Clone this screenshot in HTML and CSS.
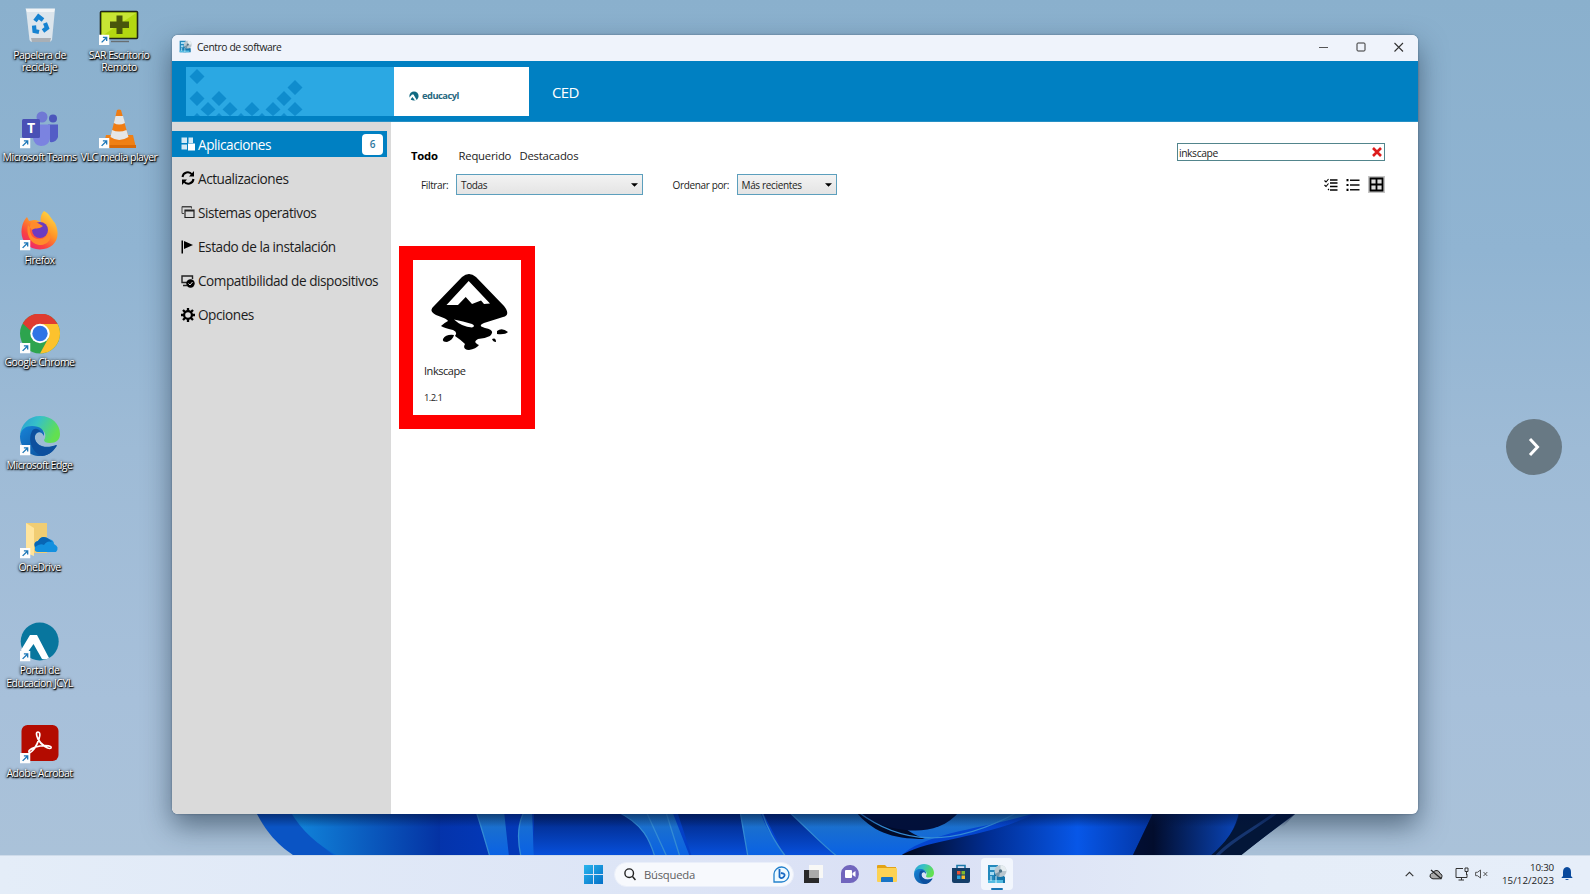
FILE: index.html
```
<!DOCTYPE html>
<html lang="es">
<head>
<meta charset="utf-8">
<title>Centro de software</title>
<link rel="stylesheet" href="styles.css">
</head>
<body>
<svg width="0" height="0" class="defs">
  <defs>
    <symbol id="shortcut" viewBox="0 0 10 10"><rect width="10" height="10" fill="#fdfdfd"/><path d="M2.500 7.500L7 3M3.700 2.700H7.300V6.300" fill="none" stroke="#1f78b8" stroke-width="1.300"/></symbol>
    <linearGradient id="edgeTop" x1="0" y1="0" x2="1" y2=".4"><stop offset="0" stop-color="#2b9bd6"/><stop offset=".45" stop-color="#36c0c8"/><stop offset="1" stop-color="#62e050"/></linearGradient>
    <linearGradient id="edgeLow" x1="0" y1="0" x2="1" y2="1"><stop offset="0" stop-color="#1784d8"/><stop offset="1" stop-color="#0b4a94"/></linearGradient>
    <symbol id="edge" viewBox="0 0 40 40">
      <path d="M0 19C1 8 9 0 20 0C32 0 40 8 40 18C40 24 36 27 30 27C26 27 24 26 24 24C27 20 25 13 19 13C12 10 3 12 0 19Z" fill="url(#edgeTop)"/>
      <path d="M0 20C1 13 6 10 12 10C20 10 25 14 24 20C20 13 14 17 15 23C16 30 26 33 36 29C37 29 37 30 36 31C32 37 27 40 20 40C9 40 0 32 0 20Z" fill="url(#edgeLow)"/>
      <path d="M12 15C7 25 13 37 22 40C30 39 34 34 37 29C28 34 17 31 15 23C14 18 18 15 21 16C18 12 14 12 12 15Z" fill="#0d4f9e"/>
    </symbol>
    <symbol id="center" viewBox="0 0 20 20">
      <path d="M1 1H11V19H1Z" fill="#2389bd"/><path d="M3 3H10V6H3ZM3 8H7V11H3Z" fill="#a7dcf3"/>
      <path d="M7 10L12 8L18 13V19H7Z" fill="#1475aa"/><path d="M1 16H16V19H1Z" fill="#54bce2"/>
      <circle cx="13.500" cy="7" r="6" fill="#bac7cf"/><path d="M13.500 1A6 6 0 0 1 19.500 7L13.500 7Z" fill="#e6edf0"/><path d="M13.500 7L8 10A6 6 0 0 0 12 13Z" fill="#7897a8"/><circle cx="13.500" cy="7" r="1.700" fill="#4e7285"/>
      <path d="M9 12V19M4 12V17" stroke="#d4eff9"/>
    </symbol>
  </defs>
</svg>
<div class="desktop">
  <svg class="bloom" viewBox="0 0 1590 60" width="1590" height="60">
    <defs>
      <linearGradient id="b0"><stop offset="0" stop-color="#0963d8"/><stop offset=".1" stop-color="#0562cf"/><stop offset=".15" stop-color="#0431a4"/><stop offset=".22" stop-color="#0337b5"/><stop offset=".5" stop-color="#0344d0"/><stop offset=".75" stop-color="#0545ce"/><stop offset=".84" stop-color="#022a80"/><stop offset="1" stop-color="#03153c"/></linearGradient>
      <linearGradient id="b1"><stop offset="0" stop-color="#1187dc"/><stop offset="1" stop-color="#0432a3"/></linearGradient>
      <linearGradient id="b2" x1="0" y1="0" x2="0" y2="1"><stop offset="0" stop-color="#2377c2"/><stop offset="1" stop-color="#0961e6"/></linearGradient>
      <linearGradient id="b3" x1="0" y1="0" x2="0" y2="1"><stop offset="0" stop-color="#01237b"/><stop offset="1" stop-color="#0751df"/></linearGradient>
      <linearGradient id="b4"><stop offset="0" stop-color="#010617"/><stop offset=".35" stop-color="#012d92"/><stop offset=".7" stop-color="#0757e8"/><stop offset="1" stop-color="#0234a2"/></linearGradient>
      <linearGradient id="b5"><stop offset="0" stop-color="#020f35"/><stop offset=".2" stop-color="#020d2d"/><stop offset="1" stop-color="#0a46bb"/></linearGradient>
      <linearGradient id="b6" x1="0" y1="0" x2="0" y2="1"><stop offset="0" stop-color="#02123a" stop-opacity=".55"/><stop offset="1" stop-color="#02123a" stop-opacity="0"/></linearGradient>
    </defs>
    <path d="M250 0L257 15L299 60H1235L1295 15L1306 0Z" fill="url(#b0)"/>
    <path d="M250 0C263 30 275 45 299 60H340C315 45 300 25 290 0Z" fill="#0a54c4"/>
    <path d="M290 12C302 32 317 46 340 58H440V12Z" fill="url(#b1)"/>
    <path d="M476 12C482 30 486 45 490 58H509L504 12Z" fill="url(#b2)"/>
    <path d="M535 0C516 15 517 40 521 58H534L532 12Z" fill="url(#b2)"/>
    <path d="M534 12H618C645 25 650 40 657 58H534Z" fill="url(#b3)"/>
    <path d="M616 12C644 25 650 42 655 58H690L672 12Z" fill="url(#b2)"/>
    <path d="M677 12H740L748 58H692Z" fill="url(#b3)"/>
    <path d="M740 12L748 58H786C775 43 765 28 760 12Z" fill="url(#b2)"/>
    <path d="M762 12H790C808 28 820 42 838 58H786Z" fill="url(#b3)"/>
    <path d="M788 12C808 30 820 44 838 58H900C925 32 990 30 1040 12Z" fill="url(#b2)"/>
    <path d="M855 12C872 32 890 40 925 40C905 32 895 25 912 12Z" fill="#010b29"/>
    <path d="M855 12H960C945 30 925 33 905 31C885 29 868 22 855 12Z" fill="#02103a"/>
    <path d="M1040 12C990 40 925 39 899 58H1132L1154 12Z" fill="url(#b4)"/>
    <path d="M1154 12L1132 58H1212C1225 45 1237 28 1239 12Z" fill="url(#b5)"/>
    <path d="M1240 12C1238 28 1225 45 1209 58H1239L1297 12Z" fill="#031638"/>
    <path d="M1278 12C1258 28 1229 42 1216 58" fill="none" stroke="#16356f" stroke-width="3"/>
    <path d="M535 0C516 15 517 40 521 58M616 12C644 25 650 42 655 58M645 10L667 58M665 10L680 58M740 12L748 58M761 10C767 30 775 43 786 58M788 12C808 30 820 44 838 58M857 12C900 45 950 50 1018 13M476 12C482 30 486 45 490 58" fill="none" stroke="#338bd4" stroke-width="1.300"/>
    <path d="M257 15L264 28H1283L1295 15Z" fill="url(#b6)"/>
  </svg>

  <main class="icons">
    <div class="shortcut">
      <svg class="art" viewBox="0 0 40 40"><path d="M6 3H35L32 34Q31 36 28 36H13Q10 36 9.500 34Z" fill="#dce5ec"/><path d="M5.500 2.500H35L34 6H7Z" fill="#f1f4f6"/><path d="M11 32H31L30 36H12Z" fill="#a9afb5"/><g fill="none" stroke="#1683d1" stroke-width="4.200"><path d="M15 15L18.500 10.500L23 14"/><path d="M25 17L27 22L23 25"/><path d="M19 26L14.500 25L14 19.500"/></g></svg>
      <span class="lbl">Papelera de<br>reciclaje</span>
    </div>
    <div class="shortcut">
      <svg class="art" viewBox="0 0 40 40"><rect x="1.500" y="5.500" width="37" height="27" rx="1" fill="#b3d811" stroke="#20251a" stroke-width="1.600"/><path d="M3 7H37L3 30Z" fill="#c8e534"/><path d="M17.500 9.500H23.500V15.500H30V22H23.500V28H17.500V22H11V15.500H17.500Z" fill="#49560c"/><path d="M12 35.500H30" stroke="#676e72" stroke-width="1.400"/><use href="#shortcut" x="0" y="28.500" width="10.500" height="10.500"/></svg>
      <span class="lbl">SAR Escritorio<br>Remoto</span>
    </div>
    <div class="shortcut">
      <svg class="art" viewBox="0 0 40 40"><circle cx="22" cy="8" r="5.500" fill="#7078d4"/><circle cx="33" cy="9.500" r="4" fill="#4c56bb"/><path d="M28 15.500H38V28Q36 34 30 33Z" fill="#535dc6"/><path d="M14 15.500H30V29Q29 37 21 37Q14 36 13 29Z" fill="#7b83e0"/><rect x="2" y="10" width="18" height="19" rx="1.500" fill="#4950b5"/><text x="11" y="24" text-anchor="middle" class="teams-t">T</text><use href="#shortcut" x="0" y="29" width="10.500" height="10.500"/></svg>
      <span class="lbl">Microsoft Teams</span>
    </div>
    <div class="shortcut">
      <svg class="art" viewBox="0 0 40 40"><path d="M7 26L34 26L37 39H4Z" fill="#f08014"/><path d="M4 36H37V39H4Z" fill="#d96a08"/><path d="M18 1Q20 0 22 1L30 30Q20 36 11 30Z" fill="#f07c12"/><path d="M16.500 7H24L26 14Q20 17 14.800 14ZM13 21Q20 24 27.500 21L29.500 28Q20 34 11.500 28Z" fill="#e5e6e6"/><use href="#shortcut" x="0" y="29" width="10.500" height="10.500"/></svg>
      <span class="lbl">VLC media player</span>
    </div>
    <div class="shortcut solo">
      <svg class="art" viewBox="0 0 40 40"><defs><linearGradient id="ff" x1=".9" y1="0" x2=".2" y2="1"><stop offset="0" stop-color="#ffe247"/><stop offset=".45" stop-color="#ff9428"/><stop offset=".75" stop-color="#fb4340"/><stop offset="1" stop-color="#e6247c"/></linearGradient></defs><path d="M24 0C30 3 31 8 35 12C42 27 34 38 20 38.500C8 38 1 30 1.500 20C2 13 4 9 7 6L9 10L14 9C18 9 20 11 21 12C20 7 21 3 24 0Z" fill="url(#ff)"/><circle cx="20" cy="19" r="8" fill="#6c3bc0"/><path d="M12 19C15 16 18 19 23 15C18 13 17 10 12 11C9 14 9 20 12 25C18 31 27 28 29 21C34 27 27 35 19 34C9 32 6 22 8 14Z" fill="#ff8b2c"/><use href="#shortcut" x="0" y="29" width="10.500" height="10.500"/></svg>
      <span class="lbl">Firefox</span>
    </div>
    <div class="shortcut solo">
      <svg class="art" viewBox="0 0 40 40"><circle cx="20" cy="19.500" r="20" fill="#2da44e"/><path d="M20 10H37.600A20 20 0 0 1 20 39.500L28.500 24Z" fill="#fcc22d"/><path d="M2.700 9.500A20 20 0 0 1 37.600 10H20Q13 11 11 17Z" fill="#df3b30"/><circle cx="20" cy="19.500" r="9.700" fill="#fff"/><circle cx="20" cy="19.500" r="7.700" fill="#2f74e6"/><use href="#shortcut" x="0" y="29" width="10.500" height="10.500"/></svg>
      <span class="lbl">Google Chrome</span>
    </div>
    <div class="shortcut solo">
      <svg class="art" viewBox="0 0 40 40"><use href="#edge" width="40" height="40"/><use href="#shortcut" x="0" y="29" width="10.500" height="10.500"/></svg>
      <span class="lbl">Microsoft Edge</span>
    </div>
    <div class="shortcut solo">
      <svg class="art" viewBox="0 0 40 40"><path d="M6 4H27V34H6Z" fill="#f1cd73"/><path d="M6 4L14 9V37L6 34Z" fill="#ffe49c"/><path d="M15 29Q13 23 18 22Q22 15 29 20Q34 21 34 25Q40 28 36 33H18Q14 33 15 29Z" fill="#1390df"/><path d="M15 28Q13 23 18 22Q22 15 29 20L32 23Q27 21 24 26Q20 24 15 28Z" fill="#0865b4"/><use href="#shortcut" x="0" y="29" width="10.500" height="10.500"/></svg>
      <span class="lbl">OneDrive</span>
    </div>
    <div class="shortcut solo">
      <svg class="art" viewBox="0 0 40 40"><circle cx="19.700" cy="19.500" r="19" fill="#08769e"/><path d="M1 28L10 13H17L29 36Q26 38 22 37L13.500 22L5 34Z" fill="#fff"/><use href="#shortcut" x="0" y="29" width="10.500" height="10.500"/></svg>
      <span class="lbl">Portal de<br>Educacion JCYL</span>
    </div>
    <div class="shortcut solo">
      <svg class="art" viewBox="0 0 40 40"><rect x="1.500" y="1" width="37" height="36" rx="6" fill="#b30b00"/><path d="M18 8C21 8 20 14 17 20C14 26 10 30 9 28C8 26 14 23 20 22C27 21 32 22 31 24C29 26 21 21 18 15C16 11 16 8 18 8Z" fill="none" stroke="#fff" stroke-width="1.700"/><use href="#shortcut" x="0" y="29" width="10.500" height="10.500"/></svg>
      <span class="lbl">Adobe Acrobat</span>
    </div>
  </main>

  <section class="window">
    <header class="titlebar">
      <svg class="t-icon" viewBox="0 0 20 20"><use href="#center"/></svg>
      <span class="t-title">Centro de software</span>
      <svg class="t-ctl" viewBox="0 0 90 12" width="90" height="12"><path d="M3 6.500H12" stroke="#555" stroke-width="1"/><rect x="41" y="2" width="8" height="8" rx="1" fill="none" stroke="#333"/><path d="M78.500 2L87 10.500M87 2L78.500 10.500" stroke="#333" stroke-width="1.100"/></svg>
    </header>
    <div class="banner">
      <div class="pattern">
        <svg width="208" height="49" viewBox="0 0 208 49"><g fill="#0f8ccd"><path d="M11 2l7.500 7.500-7.500 7.500-7.500-7.500zM11 24l7.500 7.500-7.500 7.500-7.500-7.500zM33 24l7.500 7.500-7.500 7.500-7.500-7.500zM22 35l7.500 7.500-7.500 6.500-7.500-6.500zM44 35l7.500 7.500-7.500 6.500-7.500-6.500zM66 35l7.500 7.500-7.500 6.500-7.500-6.500zM87 35l7.500 7.500-7.500 6.500-7.500-6.500zM98 24l7.500 7.500-7.500 7.500-7.500-7.500zM109 13l7.500 7.500-7.500 7.500-7.500-7.500zM109 35l7.500 7.500-7.500 6.500-7.500-6.500zM11 46l3 3h-6zM33 46l3 3h-6zM55 46l3 3h-6zM76 46l3 3h-6zM98 46l3 3h-6z"/></g></svg>
      </div>
      <div class="brand">
        <svg width="10" height="10" viewBox="0 0 10 10"><circle cx="5" cy="5" r="4.600" fill="#116a82"/><path d="M0 7L3 3.500H4.500L8 9.500H6L3.500 6L1 9Z" fill="#fff"/></svg>
        <span class="brand-name">educacyl</span>
      </div>
      <span class="org">CED</span>
    </div>
    <div class="body">
      <nav class="side">
        <div class="nav on"><svg viewBox="0 0 14 14"><path d="M.5.500H6V6H.5ZM7.500.500H12V6H7.500ZM.5 7.500H6V12.500H.5Z" fill="#d4eaf6"/><path d="M7 6.500H14V13.500H7Z" fill="#fff"/></svg><span>Aplicaciones</span><b class="count">6</b></div>
        <div class="nav"><svg viewBox="0 0 14 14"><path d="M1.500 6A5.300 5.300 0 0 1 11 3.500M12.500 8A5.300 5.300 0 0 1 3 10.500" fill="none" stroke="#000" stroke-width="2"/><path d="M13 0V5.500H8ZM1 14V8.500H6Z"/></svg><span>Actualizaciones</span></div>
        <div class="nav"><svg viewBox="0 0 14 14"><path d="M3 8.500H1V1.500H10.500V3.500M1 2H10" fill="none" stroke="#444"/><path d="M4 5H13V12.500H4ZM4 6H13" fill="none" stroke="#222" stroke-width="1.200"/></svg><span>Sistemas operativos</span></div>
        <div class="nav"><svg viewBox="0 0 14 14"><path d="M.5.500H2V13.500H.5ZM3 1L12 5L3 9Z"/></svg><span>Estado de la instalación</span></div>
        <div class="nav"><svg viewBox="0 0 14 14"><path d="M6 8.500H1V2H11.500V5M2 11.500H6" fill="none" stroke="#222" stroke-width="1.400"/><circle cx="9.500" cy="9.500" r="4.200"/><path d="M7.500 9.500L9 11L11.500 8" fill="none" stroke="#ddd"/></svg><span>Compatibilidad de dispositivos</span></div>
        <div class="nav"><svg viewBox="0 0 14 14"><circle cx="7" cy="7" r="3.900" fill="none" stroke="#000" stroke-width="2.200"/><path d="M7 0V3M7 11V14M0 7H3M11 7H14M2 2L4 4M10 10L12 12M12 2L10 4M4 10L2 12" stroke="#000" stroke-width="2.300"/></svg><span>Opciones</span></div>
      </nav>
      <div class="content">
        <div class="tools">
          <div class="left">
            <div class="tabs"><b class="tab1">Todo</b><span class="tab2">Requerido</span><span class="tab3">Destacados</span></div>
            <div class="filters">
              <span class="f-lbl">Filtrar:</span>
              <div class="combo wide"><span>Todas</span><svg viewBox="0 0 8 4"><path d="M0 0H8L4 4Z"/></svg></div>
              <span class="o-lbl">Ordenar por:</span>
              <div class="combo small"><span>Más recientes</span><svg viewBox="0 0 8 4"><path d="M0 0H8L4 4Z"/></svg></div>
            </div>
          </div>
          <div class="right">
            <div class="search"><span>inkscape</span><svg width="10" height="10" viewBox="0 0 10 10"><path d="M1 1L9 9M9 1L1 9" stroke="#dd1c1c" stroke-width="2.600"/></svg></div>
            <div class="views">
              <svg width="14" height="14" viewBox="0 0 14 14"><path d="M6 2H13.500M6 5H13.500M6 8.500H13.500M6 12H13.500" stroke="#000" stroke-width="1.700"/><path d="M.5 2.500L2 4L4.500 1M.5 7L2 8.500L4.500 5.500M4 11L5 12" fill="none" stroke="#000" stroke-width="1.100"/></svg>
              <svg width="14" height="14" viewBox="0 0 14 14"><path d="M4 2.200H13.500M4 7H13.500M4 11.800H13.500" stroke="#111" stroke-width="1.500"/><path d="M.5 2.200H2.500M.5 7H2.500M.5 11.800H2.500" stroke="#000" stroke-width="2.200"/></svg>
              <svg width="17" height="17" viewBox="0 0 17 17"><rect width="17" height="17" fill="#c4c4c4"/><rect x="3" y="3" width="11" height="11" fill="#ddd"/><path d="M2.500 2.500H14.500V14.500H2.500ZM8.500 2.500V14.500M2.500 8.500H14.500" fill="none" stroke="#000" stroke-width="1.800"/></svg>
            </div>
          </div>
        </div>
        <article class="card">
          <svg class="ink" viewBox="0 0 77 77"><path fill-rule="evenodd" d="M31 4Q38 -2 45 4L73 33Q80 42 72 44L53 50Q46 53 54 55Q65 57 59 63Q53 66 47 66Q41 69 48 72Q45 76 38 77Q31 76 34 71Q30 67 24 63Q27 59 22 57Q13 55 10 53Q13 50 17 48Q17 46 5 42Q-3 38 3 33ZM23 46.500Q31 54 41 54.500Q45 53 41 51Q32 48 23 46.500Z"/><path d="M37.700 8L15.500 32H27L34.700 24L41 31L50 27.500L53 31L59 30.500Z" fill="#fff"/><path d="M12 66Q15 61 23 62Q22 67 16 69Q11 69 12 66ZM66 58Q71 54 77 59Q74 62 66 61ZM61 66Q65 64 65 69Q62 69 61 66Z"/></svg>
          <span class="name">Inkscape</span>
          <span class="ver">1.2.1</span>
        </article>
      </div>
    </div>
  </section>

  <button class="next" aria-label="Siguiente"><svg width="56" height="56" viewBox="0 0 56 56"><path d="M24 20L31.500 28L24 36" fill="none" stroke="#fff" stroke-width="3"/></svg></button>

  <footer class="taskbar">
    <div class="apps">
      <svg class="start" width="19" height="19" viewBox="0 0 19 19"><defs><linearGradient id="w" x2="1" y2="1"><stop stop-color="#2ab5ed"/><stop offset="1" stop-color="#0570c7"/></linearGradient></defs><path d="M0 0H9V9H0ZM10 0H19V9H10ZM0 10H9V19H0ZM10 10H19V19H10Z" fill="url(#w)"/></svg>
      <div class="find">
        <svg width="12" height="13" viewBox="0 0 12 13"><circle cx="5.200" cy="5.200" r="4.300" fill="none" stroke="#222" stroke-width="1.400"/><path d="M8.500 8.500L11.500 12" stroke="#222" stroke-width="1.500"/></svg>
        <span>Búsqueda</span>
        <svg width="17" height="17" viewBox="0 0 17 17"><path d="M1 16V8A7.500 7.500 0 1 1 8.500 16Z" fill="#eefaff" stroke="#2482cd" stroke-width="1.300"/><path d="M6.500 3V11Q8 13 10 11.500Q13 9 10.500 7.500L8 7" fill="none" stroke="#1769c3" stroke-width="1.800"/></svg>
      </div>
      <div class="app"><svg width="20" height="20" viewBox="0 0 20 20"><path d="M6 1H20V14H6Z" fill="#f8f8f6"/><path d="M1 6H16V19H1Z" fill="#292929"/><path d="M6 6H16V14H6Z" fill="#aaa"/></svg></div>
      <div class="app"><svg width="20" height="20" viewBox="0 0 20 20"><path d="M1 19V9A9 9 0 1 1 10 19Z" fill="#7166bd"/><rect x="5" y="6" width="7" height="8" rx="1" fill="#fff"/><path d="M12.500 9L15.500 7V13L12.500 11Z" fill="#fff"/></svg></div>
      <div class="app"><svg width="20" height="20" viewBox="0 0 20 20"><path d="M0 2Q0 1 1 1H8L10 3H19V7H0Z" fill="#e3a316"/><rect y="4" width="20" height="14" rx="1" fill="#fcd254"/><path d="M4 18V14Q4 13 5 13H15Q16 13 16 14V18Z" fill="#1874c5"/></svg></div>
      <div class="app"><svg width="20" height="20" viewBox="0 0 40 40"><use href="#edge"/></svg></div>
      <div class="app"><svg width="20" height="20" viewBox="0 0 20 20"><path d="M6 5V1.500H14V5" fill="none" stroke="#1a78a9" stroke-width="1.600"/><path d="M1 4H19V17Q19 19 17 19H3Q1 19 1 17Z" fill="#153e68"/><path d="M6 7H9.500V10.500H6Z" fill="#e65335"/><path d="M10.500 7H14V10.500H10.500Z" fill="#80b92e"/><path d="M6 11.500H9.500V15H6Z" fill="#26a4df"/><path d="M10.500 11.500H14V15H10.500Z" fill="#f5bd28"/></svg></div>
      <div class="app active"><svg width="20" height="20" viewBox="0 0 20 20"><use href="#center"/></svg></div>
    </div>
    <div class="tray">
      <svg width="9" height="6" viewBox="0 0 9 6"><path d="M.7 5.200L4.500 1.300L8.300 5.200" fill="none" stroke="#333" stroke-width="1.100"/></svg>
      <svg width="14" height="11" viewBox="0 0 14 11"><path d="M3 9.500Q0 8.500 1.300 5.500Q2.500 4 4 4Q5 1 8 1.500Q10.500 2 11 4.500Q14 5.500 12.500 9Q12 9.800 10.500 9.800H4Z" fill="#aaa" stroke="#222"/><path d="M2 1L12.500 10" stroke="#222" stroke-width="1.300"/></svg>
      <svg width="14" height="14" viewBox="0 0 14 14"><path d="M8 1.500H1V10.500H12V7M3.500 13H9M6.500 10.500V13" fill="none" stroke="#333"/><path d="M10 1H13V4.500H10ZM11.500 4.500V8" fill="none" stroke="#333"/></svg>
      <svg width="13" height="10" viewBox="0 0 13 10"><path d="M.6 3.300H2.500L5.500 1V9L2.500 6.700H.6ZM8.500 3L12.300 7M12.300 3L8.500 7" fill="none" stroke="#444" stroke-width=".9"/></svg>
      <div class="clock"><span>10:30</span><span class="date">15/12/2023</span></div>
      <svg width="12" height="14" viewBox="0 0 12 14"><path d="M6 0Q10 .5 10 5V9L11.700 11H.3L2 9V5Q2 .5 6 0ZM4 12H8Q6 14 4 12Z" fill="#09499c"/></svg>
    </div>
  </footer>
</div>
</body>
</html>
```
FILE: styles.css
```
* { box-sizing: border-box; }
body { margin: 0; font-family: "Open Sans", "Noto Sans", sans-serif; color: #1c1c1c; }
svg { display: block; flex: none; }
span, b { white-space: nowrap; }
.defs { position: absolute; }
.desktop {
  position: relative; width: 1590px; height: 894px; overflow: hidden;
  display: grid; grid-template: 855px 39px / 172px 1246px 1fr;
  background: linear-gradient(180deg, #8ab0cd 0, #90b4d2 250px, #9ebbd6 450px, #a7c0da 700px, #aac2d9 855px);
}
.bloom { position: absolute; left: 0; top: 799px; }

/* desktop shortcuts */
.icons { position: relative; grid-area: 1 / 1; display: grid; grid-template-columns: 79px 80px; grid-auto-rows: 102.6px; padding-top: 6px; }
.solo { grid-column: 1; }
.shortcut { display: flex; flex-direction: column; align-items: center; }
.art { width: 40px; height: 40px; }
.lbl {
  margin-top: 2.5px; font-size: 10.5px; line-height: 12.6px; text-align: center; color: #fff; letter-spacing: -.5px;
  text-shadow: 0 1px 2px #000, 1px 1px 1px #000, 0 0 3px #222;
}
.teams-t { font: bold 14px "Open Sans", sans-serif; fill: #fff; }

/* application window */
.window {
  position: relative; grid-area: 1 / 2; height: 779px; margin-top: 35px; overflow: hidden;
  display: flex; flex-direction: column; border-radius: 6px; background: #fff;
}
.desktop::before {
  content: ""; grid-area: 1 / 2; height: 779px; margin-top: 35px; border-radius: 6px;
  box-shadow: 0 0 2px rgba(40, 60, 80, .6), 0 12px 28px rgba(20, 40, 60, .55);
}
.titlebar { height: 26px; flex: none; display: flex; align-items: center; padding: 0 12px 3px 7px; background: #eff3fb; }
.t-icon { width: 13px; height: 13px; }
.t-title { margin-left: 5px; font-size: 10.3px; letter-spacing: -.42px; }
.t-ctl { margin-left: auto; }
.banner { height: 61px; flex: none; display: flex; align-items: flex-start; padding: 6px 0 0 14px; background: #0080c2; border-bottom: 1px solid #2790c5; }
.pattern { width: 208px; height: 49px; background: #2ba8e3; }
.brand { width: 135px; height: 49px; display: flex; align-items: center; gap: 3px; padding: 8px 0 0 15px; background: #fff; }
.brand-name { font: bold 9.3px "Open Sans", sans-serif; color: #27687f; letter-spacing: -.5px; }
.org { margin: 15px 0 0 23px; font-size: 15px; line-height: 20px; color: #fff; letter-spacing: -.6px; }
.body { flex: 1; display: flex; min-height: 0; }

.side { width: 219px; flex: none; padding: 9px 4px 0 0; display: flex; flex-direction: column; gap: 8.2px; background: #dadada; }
.nav { height: 26px; display: flex; align-items: center; gap: 3px; padding: 0 4px 0 9px; font-size: 13.6px; letter-spacing: -.45px; }
.nav svg { width: 14px; height: 14px; }
.on { background: #0080c2; color: #fff; }
.count { margin-left: auto; width: 21px; height: 21px; border-radius: 4px; background: #fff; color: #2d78a0; font-size: 10px; line-height: 21px; text-align: center; font-weight: 600; letter-spacing: 0; }

.content { flex: 1; padding: 21px 33px 0 8px; }
.tools { display: flex; justify-content: space-between; height: 103px; }
.left { padding: 2px 0 0 12px; }
.tabs { height: 24px; display: flex; align-items: center; padding-bottom: 4px; font-size: 11.3px; letter-spacing: -.22px; }
.tab1 { width: 47.5px; color: #000; }
.tab2 { width: 61px; }
.filters { display: flex; align-items: center; margin-top: 5px; padding-left: 10px; font-size: 10px; letter-spacing: -.35px; }
.f-lbl { width: 35px; }
.o-lbl { width: 64px; margin-left: 29.5px; }
.combo { height: 21px; display: flex; align-items: center; justify-content: space-between; padding: 0 4px; border: 1px solid #5c9fbd; background: linear-gradient(#f3f3f3, #e4e4e4); }
.combo svg { width: 7px; height: 4px; }
.wide { width: 187px; }
.small { width: 100px; }
.search { width: 208px; height: 18px; display: flex; align-items: center; justify-content: space-between; padding: 0 2px 0 1px; border: 1px solid #52858c; font-size: 10.3px; letter-spacing: -.4px; }
.search span { padding-top: 2px; }
.views { display: flex; align-items: center; justify-content: flex-end; gap: 8px; margin-top: 15px; }
.card { width: 136px; height: 183px; display: flex; flex-direction: column; padding: 13px 0 0 11px; border: 14px solid #f00; background: #fff; }
.ink { width: 77px; height: 77px; margin-left: 7px; }
.name { margin-top: 13px; font-size: 11px; line-height: 16px; letter-spacing: -.45px; }
.ver { margin-top: 11px; font-size: 9.5px; line-height: 16px; letter-spacing: -.6px; }

.next { position: absolute; left: 1506px; top: 419px; width: 56px; height: 56px; padding: 0; border: 0; border-radius: 50%; background: #687984; }

/* taskbar */
.taskbar { position: relative; grid-area: 2 / 1 / 3 / 4; display: flex; justify-content: space-between; padding: 0 17px 2px 584px; background: linear-gradient(90deg, #e4edf8, #dde5f6 40%, #dae0f5 58%, #e5edf8 80%, #e6eef9); border-top: 1px solid #cedbea; }
.apps { display: flex; align-items: center; }
.find { width: 180px; height: 25px; margin: 0 1px 0 11px; display: flex; align-items: center; padding: 0 3px 0 9px; border-radius: 13px; background: #f7f9fd; border: 1px solid #eaeffa; color: #606060; font-size: 11.3px; letter-spacing: -.25px; }
.find span { margin: 0 auto 0 8px; }
.app { width: 36.8px; height: 32px; display: flex; align-items: center; justify-content: center; }
.active { width: 32px; margin-left: 2px; position: relative; border-radius: 4px; background: #f2f6fd; }
.active::after { content: ""; position: absolute; left: 10px; bottom: 0; width: 12px; height: 2px; border-radius: 1px; background: #1976b6; }
.tray { display: flex; align-items: center; gap: 7px; }
.tray svg:first-child { margin-right: 8px; }
.tray svg:nth-child(2) { margin-right: 5px; }
.tray svg:nth-child(4) { margin-left: -1px; }
.clock { width: 59px; display: flex; flex-direction: column; align-items: flex-end; font-size: 9.8px; line-height: 13px; letter-spacing: -.2px; }
.date { letter-spacing: 0; }
```
